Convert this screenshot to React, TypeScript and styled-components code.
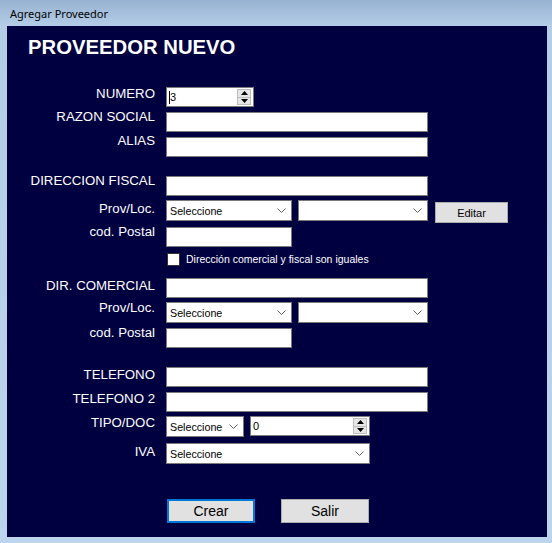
import React from "react";
import styled, { createGlobalStyle } from "styled-components";

const Global = createGlobalStyle`
  html, body { margin: 0; padding: 0; }
  body { width: 552px; height: 543px; overflow: hidden; background: #bcd4ec; }
`;

const Window = styled.div`
  width: 552px;
  height: 543px;
  display: flex;
  flex-direction: column;
  background: linear-gradient(#97b2d1 0px, #b4cde7 26px, #bcd4ec 100%);
  font-family: "Liberation Sans", Arial, sans-serif;
`;

const TitleBar = styled.div`
  height: 26px;
  display: flex;
  align-items: center;
  padding-left: 10px;
  font-family: "Noto Sans", "Open Sans", sans-serif;
  font-size: 11px;
  color: #000;
`;

const Panel = styled.div`
  margin: 0 5px 6px 7px;
  height: 511px;
  background: #000040;
  color: #fff;
  display: flex;
  flex-direction: column;
`;

const Heading = styled.h1`
  margin: 9px 0 0 21px;
  font-size: 20.3px;
  line-height: 24px;
  font-weight: bold;
  color: #fff;
`;

const Row = styled.div<{ $mt: number }>`
  display: flex;
  align-items: flex-start;
  margin-top: ${(p) => p.$mt}px;
`;

const Label = styled.div<{ $dy: number }>`
  width: 148px;
  margin-right: 11px;
  margin-top: ${(p) => p.$dy}px;
  text-align: right;
  font-size: 13.25px;
  line-height: 15px;
  white-space: nowrap;
  color: #fff;
`;

const Fields = styled.div`
  display: flex;
  align-items: flex-start;
  gap: 6px;
`;

const TextBox = styled.div<{ $w: number }>`
  box-sizing: border-box;
  width: ${(p) => p.$w}px;
  height: 20px;
  background: #fff;
  border: 1px solid #7a7a7a;
`;

const Combo = styled.div<{ $w: number }>`
  box-sizing: border-box;
  width: ${(p) => p.$w}px;
  height: 21px;
  background: #fff;
  border: 1px solid #7a7a7a;
  display: flex;
  align-items: center;
  justify-content: space-between;
  padding: 0 5px 0 3px;
  font-size: 10.7px;
  color: #000;
`;

const Spinner = styled.div<{ $w: number }>`
  box-sizing: border-box;
  width: ${(p) => p.$w}px;
  height: 20px;
  background: #fff;
  border: 1px solid #7a7a7a;
  display: flex;
  align-items: center;
  padding: 1px 2px 1px 2px;
  font-size: 11px;
  color: #000;
`;

const SpinValue = styled.div`
  flex: 1;
  display: flex;
  align-items: center;
`;

const Caret = styled.span`
  display: inline-block;
  width: 1px;
  height: 13px;
  background: #000;
`;

const SpinButtons = styled.div`
  box-sizing: border-box;
  width: 14px;
  height: 16px;
  display: flex;
  flex-direction: column;
  background: #e6e6e6;
  border: 1px solid #bdbdbd;
`;

const SpinHalf = styled.div<{ $down?: boolean }>`
  flex: 1;
  display: flex;
  align-items: center;
  justify-content: center;
  border-top: ${(p) => (p.$down ? "1px solid #bdbdbd" : "none")};
`;

const Button = styled.button<{ $w: number; $h: number; $size: number; $focus?: boolean }>`
  box-sizing: border-box;
  width: ${(p) => p.$w}px;
  height: ${(p) => p.$h}px;
  background: #e1e1e1;
  border: ${(p) => (p.$focus ? "2px solid #0078d7" : "1px solid #adadad")};
  font-family: "Liberation Sans", Arial, sans-serif;
  font-size: ${(p) => p.$size}px;
  color: #000;
  padding: 0;
  margin: 0;
`;

const EditButton = styled(Button)`
  margin-left: 1px;
  margin-top: 2px;
`;

const CheckRow = styled.div`
  display: flex;
  align-items: center;
  margin-top: 6px;
  margin-left: 160px;
  gap: 6px;
  font-size: 10.5px;
  line-height: 13px;
  color: #fff;
`;

const CheckBox = styled.div`
  box-sizing: border-box;
  width: 13px;
  height: 13px;
  background: #fff;
  border: 1px solid #333;
`;

const ButtonBar = styled.div`
  display: flex;
  gap: 26px;
  margin-top: 35px;
  margin-left: 160px;
`;

const Chevron = () => (
  <svg width="9" height="5" viewBox="0 0 9 5">
    <polyline points="0.5,0.5 4.5,4.5 8.5,0.5" fill="none" stroke="#606060" strokeWidth="1" />
  </svg>
);

const Arrow = ({ down }: { down?: boolean }) => (
  <svg width="7" height="4" viewBox="0 0 7 4">
    <polygon points={down ? "0,0 7,0 3.5,4" : "3.5,0 7,4 0,4"} fill="#000" />
  </svg>
);

const SpinBox = ({ w, value, caret }: { w: number; value: string; caret?: boolean }) => (
  <Spinner $w={w}>
    <SpinValue>
      {caret && <Caret />}
      {value}
    </SpinValue>
    <SpinButtons>
      <SpinHalf>
        <Arrow />
      </SpinHalf>
      <SpinHalf $down>
        <Arrow down />
      </SpinHalf>
    </SpinButtons>
  </Spinner>
);

const Select = ({ w, text }: { w: number; text?: string }) => (
  <Combo $w={w}>
    <span>{text ?? ""}</span>
    <Chevron />
  </Combo>
);

export default function App() {
  return (
    <>
      <Global />
      <Window>
        <TitleBar>Agregar Proveedor</TitleBar>
        <Panel>
          <Heading>PROVEEDOR NUEVO</Heading>

          <Row $mt={28}>
            <Label $dy={-1}>NUMERO</Label>
            <Fields>
              <SpinBox w={88} value="3" caret />
            </Fields>
          </Row>
          <Row $mt={5}>
            <Label $dy={-3}>RAZON SOCIAL</Label>
            <Fields>
              <TextBox $w={262} />
            </Fields>
          </Row>
          <Row $mt={5}>
            <Label $dy={-4}>ALIAS</Label>
            <Fields>
              <TextBox $w={262} />
            </Fields>
          </Row>

          <Row $mt={19}>
            <Label $dy={-3}>DIRECCION FISCAL</Label>
            <Fields>
              <TextBox $w={262} />
            </Fields>
          </Row>
          <Row $mt={4}>
            <Label $dy={1}>Prov/Loc.</Label>
            <Fields>
              <Select w={126} text="Seleccione" />
              <Select w={130} />
              <EditButton $w={73} $h={21} $size={11}>
                Editar
              </EditButton>
            </Fields>
          </Row>
          <Row $mt={4}>
            <Label $dy={-3}>cod. Postal</Label>
            <Fields>
              <TextBox $w={126} />
            </Fields>
          </Row>
          <CheckRow>
            <CheckBox />
            <span>Dirección comercial y fiscal son iguales</span>
          </CheckRow>

          <Row $mt={12}>
            <Label $dy={0}>DIR. COMERCIAL</Label>
            <Fields>
              <TextBox $w={262} />
            </Fields>
          </Row>
          <Row $mt={4}>
            <Label $dy={-2}>Prov/Loc.</Label>
            <Fields>
              <Select w={126} text="Seleccione" />
              <Select w={130} />
            </Fields>
          </Row>
          <Row $mt={5}>
            <Label $dy={-3}>cod. Postal</Label>
            <Fields>
              <TextBox $w={126} />
            </Fields>
          </Row>

          <Row $mt={19}>
            <Label $dy={0}>TELEFONO</Label>
            <Fields>
              <TextBox $w={262} />
            </Fields>
          </Row>
          <Row $mt={5}>
            <Label $dy={-1}>TELEFONO 2</Label>
            <Fields>
              <TextBox $w={262} />
            </Fields>
          </Row>
          <Row $mt={4}>
            <Label $dy={-1}>TIPO/DOC</Label>
            <Fields>
              <Select w={78} text="Seleccione" />
              <SpinBox w={120} value="0" />
            </Fields>
          </Row>
          <Row $mt={6}>
            <Label $dy={1}>IVA</Label>
            <Fields>
              <Select w={204} text="Seleccione" />
            </Fields>
          </Row>

          <ButtonBar>
            <Button $w={88} $h={24} $size={14} $focus>
              Crear
            </Button>
            <Button $w={88} $h={24} $size={14}>
              Salir
            </Button>
          </ButtonBar>
        </Panel>
      </Window>
    </>
  );
}
